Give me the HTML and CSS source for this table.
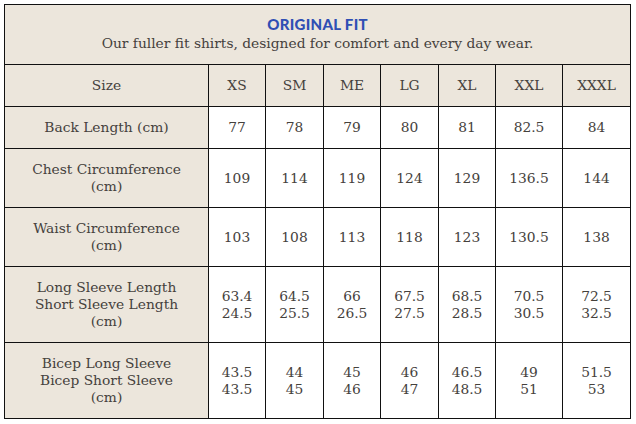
FILE: index.html
```html
<!DOCTYPE html>
<html>
<head>
<meta charset="utf-8">
<link rel="stylesheet" href="styles.css">
</head>
<body>
<table class="chart">
  <colgroup>
    <col class="c-label"><col class="c57"><col class="c58"><col class="c57"><col class="c58"><col class="c57"><col class="c67"><col class="c68">
  </colgroup>
  <tr class="r-head">
    <td colspan="8" class="head">
      <div class="title">ORIGINAL FIT</div>
      <div class="sub">Our fuller fit shirts, designed for comfort and every day wear.</div>
    </td>
  </tr>
  <tr class="r42 sizes">
    <td>Size</td><td>XS</td><td>SM</td><td>ME</td><td>LG</td><td>XL</td><td>XXL</td><td>XXXL</td>
  </tr>
  <tr class="r42">
    <td class="label">Back Length (cm)</td><td>77</td><td>78</td><td>79</td><td>80</td><td>81</td><td>82.5</td><td>84</td>
  </tr>
  <tr class="r59">
    <td class="label">Chest Circumference<br>(cm)</td><td>109</td><td>114</td><td>119</td><td>124</td><td>129</td><td>136.5</td><td>144</td>
  </tr>
  <tr class="r59">
    <td class="label">Waist Circumference<br>(cm)</td><td>103</td><td>108</td><td>113</td><td>118</td><td>123</td><td>130.5</td><td>138</td>
  </tr>
  <tr class="r76">
    <td class="label">Long Sleeve Length<br>Short Sleeve Length<br>(cm)</td><td>63.4<br>24.5</td><td>64.5<br>25.5</td><td>66<br>26.5</td><td>67.5<br>27.5</td><td>68.5<br>28.5</td><td>70.5<br>30.5</td><td>72.5<br>32.5</td>
  </tr>
  <tr class="r76">
    <td class="label">Bicep Long Sleeve<br>Bicep Short Sleeve<br>(cm)</td><td>43.5<br>43.5</td><td>44<br>45</td><td>45<br>46</td><td>46<br>47</td><td>46.5<br>48.5</td><td>49<br>51</td><td>51.5<br>53</td>
  </tr>
</table>
</body>
</html>
```
FILE: styles.css
```css
html, body {
  margin: 0;
  background: #ffffff;
}
body {
  padding: 4px;
}
.chart {
  border-collapse: collapse;
  table-layout: fixed;
  width: 627px;
  font-family: "DejaVu Serif", serif;
  font-size: 13.8px;
  line-height: 17px;
  color: #45413c;
}
.c-label { width: 204px; }
.c57 { width: 57px; }
.c58 { width: 58px; }
.c67 { width: 67px; }
.c68 { width: 68px; }
.chart td {
  border: 1.5px solid #111111;
  text-align: center;
  vertical-align: middle;
  padding: 0 4px;
  background: #ffffff;
}
.chart td.head {
  background: #ece6dc;
  height: 59px;
  padding: 0;
}
.title {
  font-family: "Lato", "Open Sans", sans-serif;
  font-weight: 900;
  font-size: 15px;
  line-height: 17px;
  color: #2f4fb4;
  letter-spacing: 0.3px;
}
.sub {
  line-height: 20px;
}
.chart tr.sizes td,
.chart td.label {
  background: #ece6dc;
}
.r42 td { height: 41px; }
.r59 td { height: 58px; }
.r76 td { height: 75px; }
```
